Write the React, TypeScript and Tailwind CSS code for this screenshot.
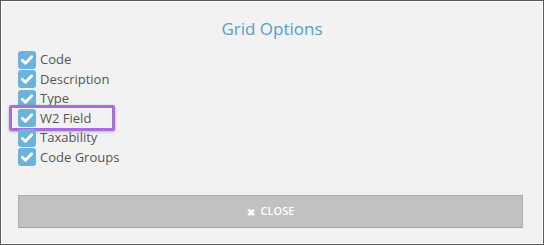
import React from "react";

const columns = ["Code", "Description", "Type", "W2 Field", "Taxability", "Code Groups"];

const CheckBox: React.FC = () => (
  <span className="flex h-[18px] w-[18px] shrink-0 items-center justify-center rounded-[3px] bg-[#6bb3da]">
    <svg width="14" height="14" viewBox="0 0 16 16" fill="none">
      <path d="M2.6 8.4 L6.2 11.8 L13.4 4.4" stroke="#ffffff" strokeWidth="3.2" strokeLinecap="round" strokeLinejoin="round" />
    </svg>
  </span>
);

export default function App() {
  return (
    <div className="h-[245px] w-[544px] border border-[#5a5a5a] bg-[#f2f2f2] shadow-[inset_0_0_0_1px_#ffffff] font-['Open_Sans',sans-serif]">
      <h2 className="pt-[16px] text-center text-[17px] leading-[24px] text-[#5a9ccb]">Grid Options</h2>

      <ul className="mt-[9px] flex flex-col pl-[17px]">
        {columns.map((col) => (
          <li key={col} className="relative flex h-[19.5px] items-center gap-[4px]">
            <CheckBox />
            <span className="text-[13px] leading-none text-[#555555]">{col}</span>
            {col === "W2 Field" && (
              <span className="absolute left-[-9px] top-[-4px] h-[26px] w-[106px] rounded-[2px] border-[3px] border-[#a46fdb] shadow-[0_1px_3px_rgba(0,0,0,0.25)]" />
            )}
          </li>
        ))}
      </ul>

      <div className="mt-[28px] pl-[17px] pr-[20px]">
        <button className="flex h-[33px] w-full items-center justify-center gap-[6px] border border-[#adadad] border-b-[#a0a0a0] bg-[#c1c1c1] text-[11px] font-semibold text-white">
          <span className="text-[10px] leading-none">✖</span>
          <span>CLOSE</span>
        </button>
      </div>
    </div>
  );
}
